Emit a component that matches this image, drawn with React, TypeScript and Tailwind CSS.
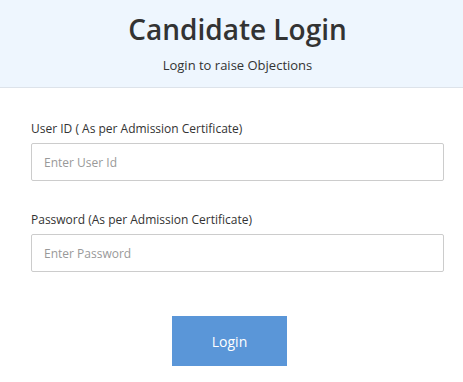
export default function App() {
  return (
    <div className="w-[463px] h-[382px] bg-white font-['Open_Sans',sans-serif] text-[#333]">
      {/* Header */}
      <div className="h-[88px] bg-[#eef6fe] border-b border-[#dde3ea] flex flex-col items-center pt-[10px] pl-[12px]">
        <h1 className="text-[28px] leading-[38px] font-semibold text-[#333]">Candidate Login</h1>
        <p className="mt-[8px] text-[13px] leading-[18px] text-[#333]">Login to raise Objections</p>
      </div>

      {/* Form */}
      <div className="pl-[31px] pr-[19px] pt-[32px]">
        <label className="block text-[12px] leading-[18px] text-[#333]">User ID ( As per Admission Certificate)</label>
        <input
          type="text"
          placeholder="Enter User Id"
          className="mt-[5px] block w-full h-[38px] px-[12px] border border-[#ccc] rounded-[2px] text-[12px] placeholder:text-[#999] outline-none"
        />

        <label className="block mt-[30px] text-[12px] leading-[18px] text-[#333]">Password (As per Admission Certificate)</label>
        <input
          type="password"
          placeholder="Enter Password"
          className="mt-[5px] block w-full h-[38px] px-[12px] border border-[#ccc] rounded-[2px] text-[12px] placeholder:text-[#999] outline-none"
        />

        <div className="flex justify-center pr-[16px] mt-[44px]">
          <button className="w-[115px] h-[50px] bg-[#5a96d8] text-white text-[14px]">Login</button>
        </div>
      </div>
    </div>
  );
}
